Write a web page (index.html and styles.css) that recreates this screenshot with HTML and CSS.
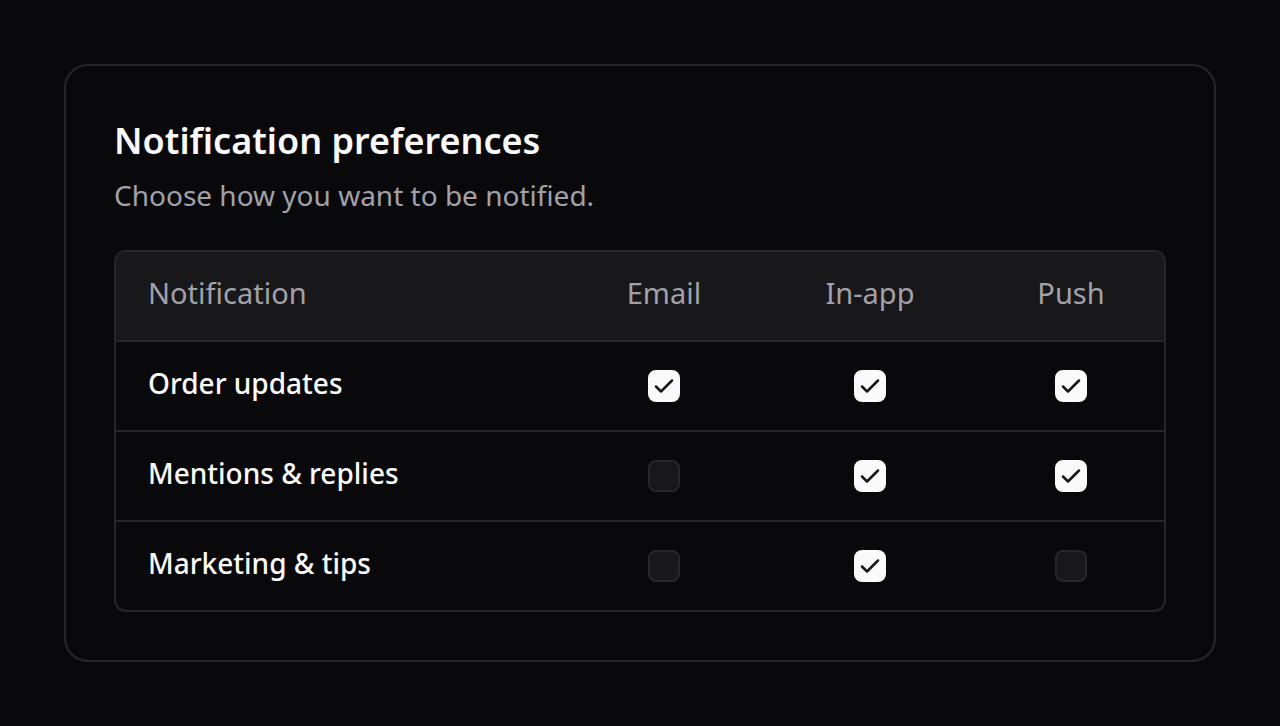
FILE: index.html
```
<!DOCTYPE html>
<html lang="en">
<head>
  <meta charset="UTF-8" />
  <title>Notification preferences</title>
  <meta name="viewport" content="width=device-width, initial-scale=1" />
  <link rel="stylesheet" href="styles.css">
</head>
<body>

<main class="card">
  <h1>Notification preferences</h1>
  <p class="subtitle">Choose how you want to be notified.</p>

  <div class="prefs">
    <div class="row head">
      <div class="name">Notification</div>
      <div class="cell">Email</div>
      <div class="cell">In-app</div>
      <div class="cell">Push</div>
    </div>

    <div class="row">
      <div class="name">Order updates</div>
      <div class="cell"><span class="box on"><svg viewBox="0 0 32 32"><path d="M8 16.5l5 5 11-11"/></svg></span></div>
      <div class="cell"><span class="box on"><svg viewBox="0 0 32 32"><path d="M8 16.5l5 5 11-11"/></svg></span></div>
      <div class="cell"><span class="box on"><svg viewBox="0 0 32 32"><path d="M8 16.5l5 5 11-11"/></svg></span></div>
    </div>

    <div class="row">
      <div class="name">Mentions &amp; replies</div>
      <div class="cell"><span class="box"></span></div>
      <div class="cell"><span class="box on"><svg viewBox="0 0 32 32"><path d="M8 16.5l5 5 11-11"/></svg></span></div>
      <div class="cell"><span class="box on"><svg viewBox="0 0 32 32"><path d="M8 16.5l5 5 11-11"/></svg></span></div>
    </div>

    <div class="row">
      <div class="name">Marketing &amp; tips</div>
      <div class="cell"><span class="box"></span></div>
      <div class="cell"><span class="box on"><svg viewBox="0 0 32 32"><path d="M8 16.5l5 5 11-11"/></svg></span></div>
      <div class="cell"><span class="box"></span></div>
    </div>
  </div>
</main>

</body>
</html>
```

FILE: styles.css
```
body {
  font-family: 'Noto Sans', 'Open Sans', sans-serif;
  margin: 0;
  background-color: #09090b;
  color: #fafafa;
  padding: 64px 64px;
}
.card {
  border: 2px solid #27272a;
  border-radius: 24px;
  padding: 50px 48px 48px;
  background: #09090b;
}
h1 {
  margin: 0;
  font-size: 36px;
  font-weight: 600;
  line-height: 1.4;
}
.subtitle {
  margin: 10px 0 0;
  font-size: 28px;
  line-height: 1.4;
  color: #a1a1aa;
}

/* preferences table */
.prefs {
  margin-top: 34px;
  border: 2px solid #27272a;
  border-radius: 12px;
  overflow: hidden;
}
.row {
  display: grid;
  grid-template-columns: 450px 196px 216px 1fr;
  align-items: center;
  height: 88px;
  font-size: 28px;
  font-weight: 500;
  border-top: 2px solid #27272a;
}
.row.head {
  border-top: none;
  background: #18181b;
  color: #a1a1aa;
  font-size: 29px;
  font-weight: 400;
}
.name {
  padding: 0 0 6px 32px;
}
.head .cell {
  padding-bottom: 6px;
}
.cell {
  display: flex;
  justify-content: center;
}
.box {
  width: 28px;
  height: 28px;
  border: 2px solid #27272a;
  border-radius: 8px;
  background: #18181b;
  display: flex;
}
.box.on {
  background: #fafafa;
  border-color: #fafafa;
}
.box svg {
  width: 32px;
  height: 32px;
  margin: -2px;
  fill: none;
  stroke: #18181b;
  stroke-width: 2.5;
  stroke-linecap: round;
  stroke-linejoin: round;
}
```
